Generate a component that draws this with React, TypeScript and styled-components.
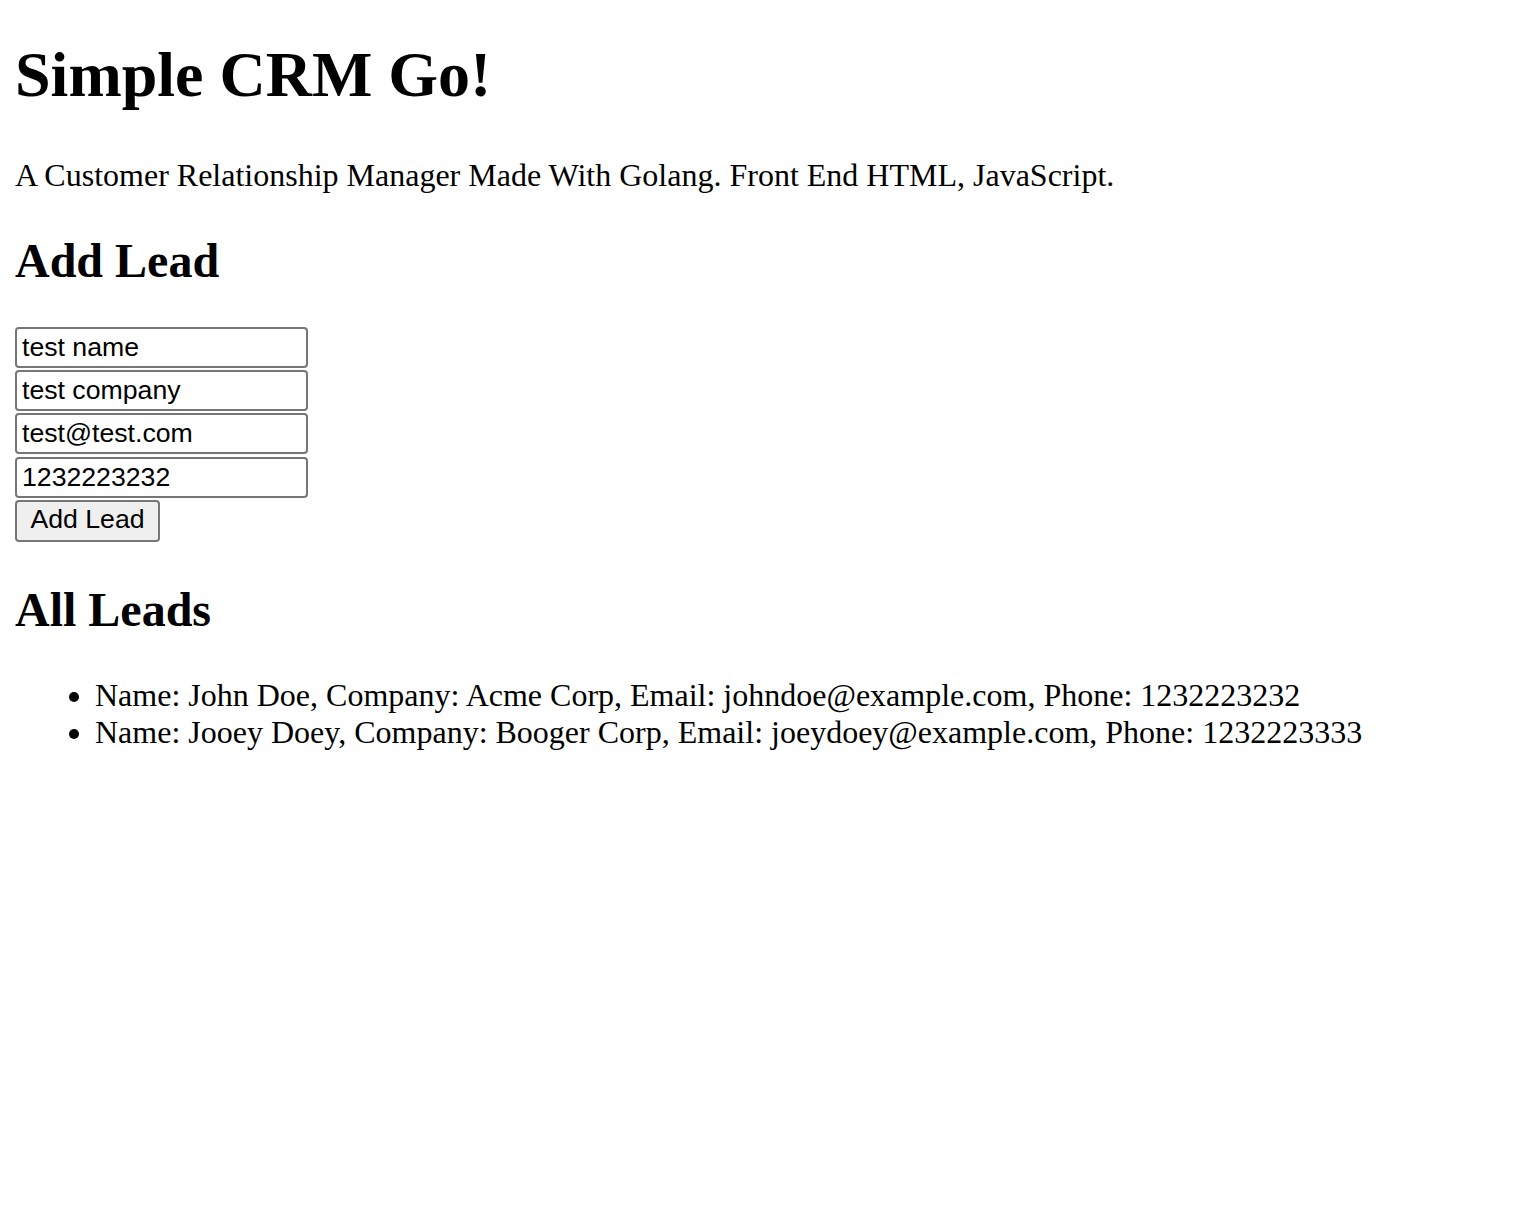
import styled, { createGlobalStyle } from "styled-components";

const GlobalStyle = createGlobalStyle`
  html, body {
    margin: 0;
    padding: 0;
    background: #fff;
  }
  body {
    font-family: "Liberation Serif", "Times New Roman", serif;
    color: #000;
  }
`;

const Page = styled.main`
  padding: 1px 15px 0;
  margin-top: -1px;
`;

const Title = styled.h1`
  font-size: 64px;
  line-height: 74px;
  font-weight: 700;
  margin: 38px 0 0;
`;

const Lead = styled.p`
  font-size: 32px;
  line-height: 37px;
  margin: 45px 0 0;
`;

const SectionTitle = styled.h2<{ $gap: number }>`
  font-size: 48px;
  line-height: 55px;
  font-weight: 700;
  margin: ${(p) => p.$gap}px 0 0;
`;

const LeadForm = styled.form`
  display: flex;
  flex-direction: column;
  align-items: flex-start;
  gap: 2.2px;
  margin-top: 39px;
`;

const Field = styled.input`
  box-sizing: border-box;
  width: 293px;
  height: 41px;
  padding: 2px 5px;
  border: 2px solid #767676;
  border-radius: 4px;
  font-family: "Liberation Sans", Arial, sans-serif;
  font-size: 26.67px;
  color: #000;
  background: #fff;
  outline: none;
`;

const SubmitButton = styled.button`
  box-sizing: border-box;
  width: 145px;
  height: 42px;
  padding: 0 12px 3px;
  border: 2px solid #767676;
  border-radius: 4px;
  background: #efefef;
  font-family: "Liberation Sans", Arial, sans-serif;
  font-size: 26.67px;
  color: #000;
`;

const LeadList = styled.ul`
  margin: 40px 0 0;
  padding-left: 80px;
  font-size: 32px;
  line-height: 37.7px;
`;

const LeadItem = styled.li``;

const leads = [
  { name: "John Doe", company: "Acme Corp", email: "johndoe@example.com", phone: "1232223232" },
  { name: "Jooey Doey", company: "Booger Corp", email: "joeydoey@example.com", phone: "1232223333" },
];

export default function App() {
  return (
    <>
      <GlobalStyle />
      <Page>
        <Title>Simple CRM Go!</Title>
        <Lead>A Customer Relationship Manager Made With Golang. Front End HTML, JavaScript.</Lead>
        <SectionTitle $gap={39}>Add Lead</SectionTitle>
        <LeadForm onSubmit={(e) => e.preventDefault()}>
          <Field defaultValue="test name" />
          <Field defaultValue="test company" />
          <Field defaultValue="test@test.com" />
          <Field defaultValue="1232223232" />
          <SubmitButton type="submit">Add Lead</SubmitButton>
        </LeadForm>
        <SectionTitle $gap={40}>All Leads</SectionTitle>
        <LeadList>
          {leads.map((l) => (
            <LeadItem key={l.email}>
              Name: {l.name}, Company: {l.company}, Email: {l.email}, Phone: {l.phone}
            </LeadItem>
          ))}
        </LeadList>
      </Page>
    </>
  );
}
